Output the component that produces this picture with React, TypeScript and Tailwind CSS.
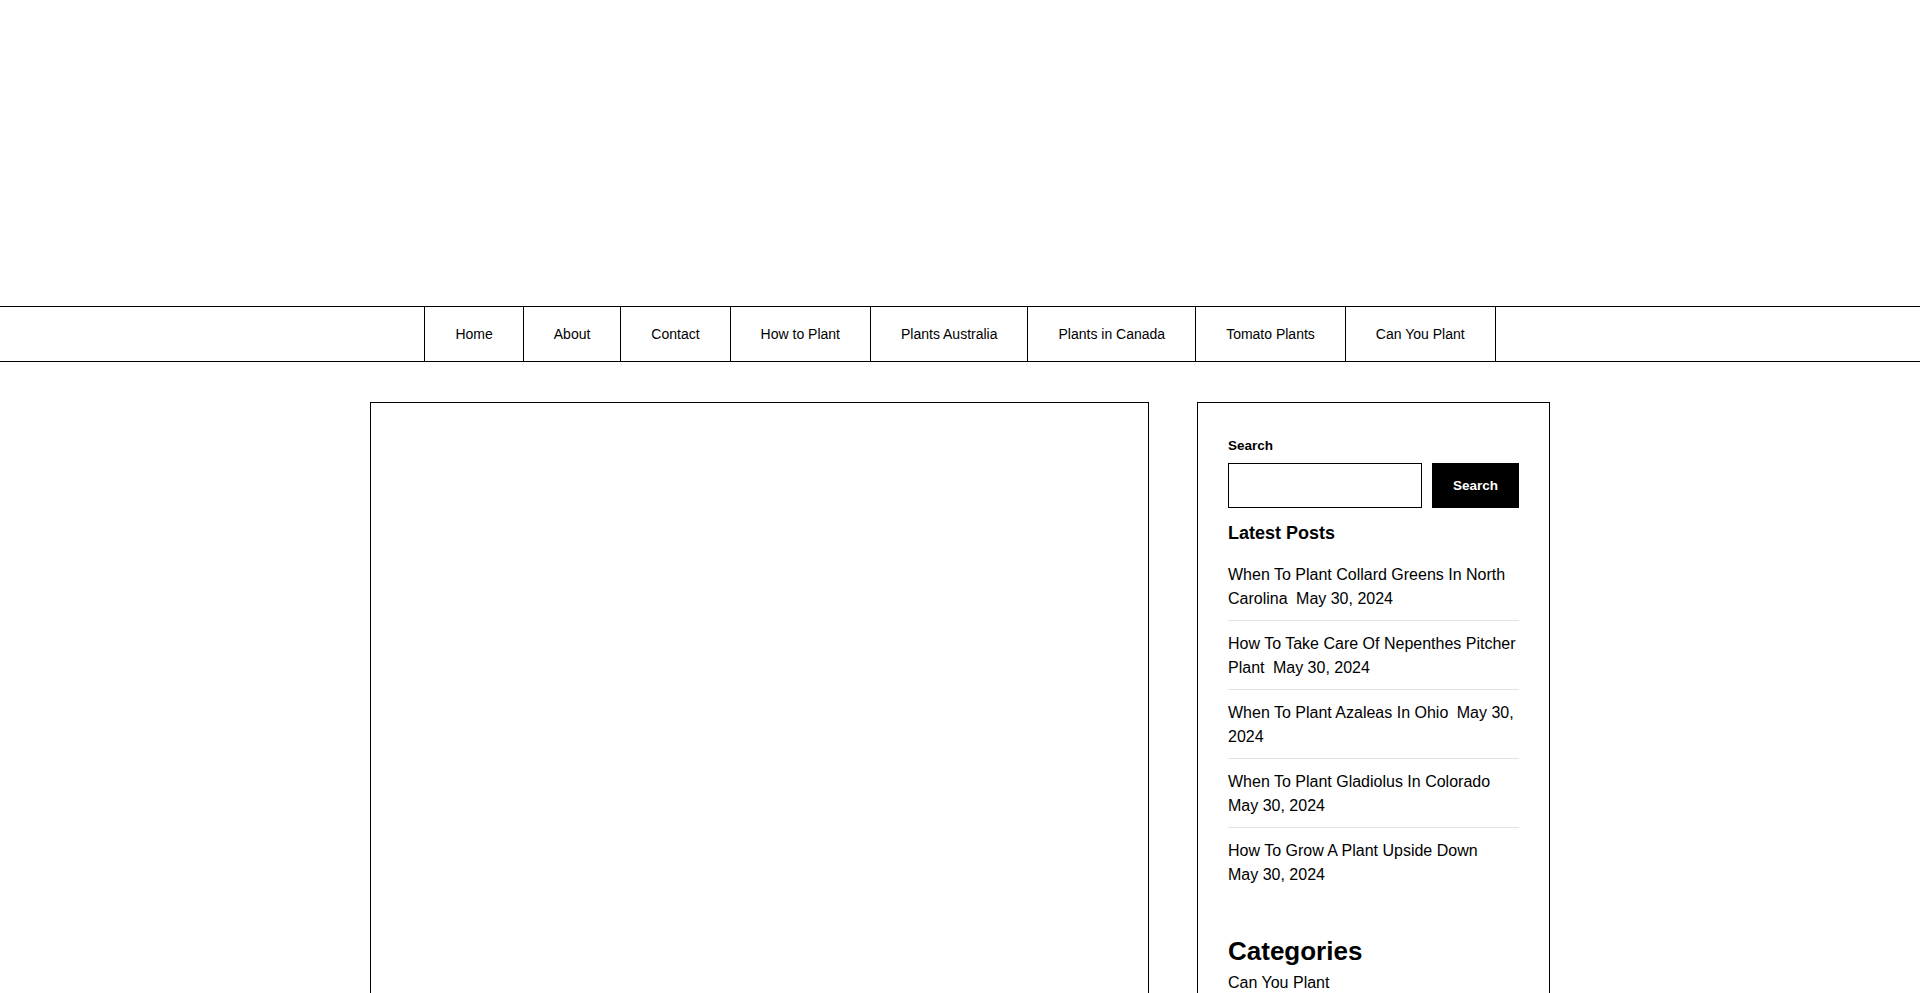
const navItems = [
  "Home",
  "About",
  "Contact",
  "How to Plant",
  "Plants Australia",
  "Plants in Canada",
  "Tomato Plants",
  "Can You Plant",
];

const posts = [
  { title: "When To Plant Collard Greens In North Carolina", breakDate: false },
  { title: "How To Take Care Of Nepenthes Pitcher Plant", breakDate: false },
  { title: "When To Plant Azaleas In Ohio", breakDate: false },
  { title: "When To Plant Gladiolus In Colorado", breakDate: false },
  { title: "How To Grow A Plant Upside Down", breakDate: true },
];

export default function App() {
  return (
    <div className="h-[993px] overflow-hidden bg-white text-black font-['Liberation_Sans',Arial,sans-serif]">
      <div className="h-[306px]" />
      <nav className="border-y border-black flex justify-center">
        {navItems.map((item, i) => (
          <a
            key={item}
            href="#"
            className={
              "h-[54px] px-[30px] flex items-center border-l border-black text-[14px] text-black " +
              (i === navItems.length - 1 ? "border-r" : "")
            }
          >
            {item}
          </a>
        ))}
      </nav>
      <div className="mt-[40px] w-[1180px] mx-auto flex gap-[48px] items-start">
        <main className="w-[779px] h-[900px] border border-black shrink-0" />
        <aside className="w-[353px] shrink-0 border border-black px-[30px] pt-[33px] pb-[40px]">
          <label className="block text-[13.5px] leading-[20px] font-bold mb-[7px]">Search</label>
          <div className="flex gap-[10px]">
            <input className="flex-1 min-w-0 h-[45px] border border-black outline-none px-2" />
            <button className="w-[87px] h-[45px] bg-black text-white text-[13.5px] font-bold leading-[46px]">Search</button>
          </div>
          <h2 className="mt-[14px] text-[18px] leading-[22px] font-bold">Latest Posts</h2>
          <ul className="mt-[19px]">
            {posts.map((p, i) => (
              <li
                key={p.title}
                className={
                  "text-[16px] leading-[24px] " +
                  (i === 0 ? "" : "pt-[11px] ") +
                  (i === posts.length - 1 ? "" : "pb-[9px] border-b border-[#e2e2e2]")
                }
              >
                <a href="#" className="mr-[4px]">{p.title}</a>
                {p.breakDate ? <br /> : " "}
                <span>May 30, 2024</span>
              </li>
            ))}
          </ul>
          <h2 className="mt-[49px] text-[26px] leading-[31px] font-bold">Categories</h2>
          <div className="mt-[4px] text-[16px] leading-[24px]">Can You Plant</div>
          <div className="mt-[4px] text-[16px] leading-[24px]">How to Plant</div>
        </aside>
      </div>
    </div>
  );
}
